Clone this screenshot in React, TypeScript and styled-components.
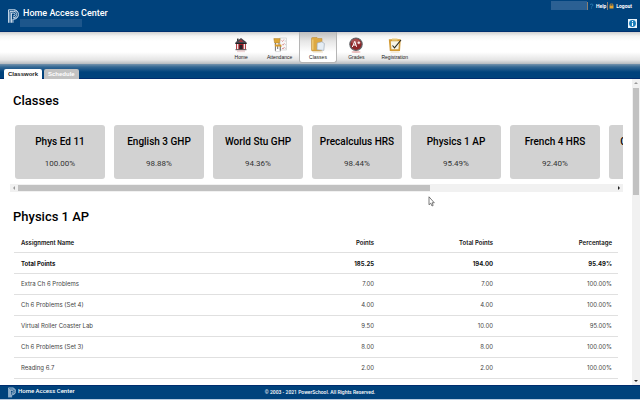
import React from "react";
import styled, { createGlobalStyle } from "styled-components";

const GlobalStyle = createGlobalStyle`
  * { box-sizing: border-box; }
  html, body, #root { height: 100%; }
  body { margin: 0; background: #fff; color: #000; font-family: Roboto, "Liberation Sans", sans-serif; }
  a { color: inherit; text-decoration: none; }
  button { font: inherit; color: inherit; border: 0; padding: 0; margin: 0; background: none; }
`;

const Page = styled.div`
  position: relative;
  display: flex;
  flex-direction: column;
  height: 100vh;
  overflow: hidden;
`;

const Header = styled.header`
  display: flex;
  justify-content: space-between;
  flex: none;
  height: 32px;
  padding: 0 3px 0 8px;
  background: #00427c;
  border-bottom: 1px solid #003070;
  color: #fff;
`;

const Brand = styled.div`
  display: flex;
  gap: 4px;
  padding-top: 8px;
`;

const BrandText = styled.div`
  display: flex;
  flex-direction: column;
`;

const BrandTitle = styled.span`
  font-size: 9px;
  line-height: 11px;
  font-weight: 500;
  white-space: nowrap;
`;

const StudentBox = styled.span`
  width: 62px;
  height: 8px;
  margin-left: -3px;
  background: #1d568b;
`;

const Account = styled.div`
  display: flex;
  flex-direction: column;
  align-items: flex-end;
  justify-content: space-between;
  padding: 1px 0 3px;
`;

const AccountLinks = styled.nav`
  display: flex;
  align-items: center;
  height: 9px;
  padding-right: 4px;
  font-size: 5px;
  line-height: 8px;
  font-weight: 700;
`;

const UserName = styled.span`
  width: 36px;
  height: 9px;
  background: #2b6093;
`;

const AccountLink = styled.a`
  display: flex;
  align-items: center;
  gap: 2px;
  height: 8px;
  padding: 0 1px;
  border-left: 1px solid #8a7f72;
`;

const InfoButton = styled.button`
  display: flex;
  align-items: center;
  justify-content: center;
  width: 9px;
  height: 9px;
  background: #e9f3fb;
`;

const MainNav = styled.nav`
  display: flex;
  justify-content: center;
  flex: none;
  height: 32px;
  padding-right: 4px;
  background: linear-gradient(#cfcfcf, #f4f4f4 4px, #fff 9px, #fff 20px, #e4e4e4 28px, #b4b9be 32px);
`;

const NavGrid = styled.div`
  display: grid;
  grid-template-columns: repeat(5, 1fr);
  width: 192px;
`;

const NavItem = styled.a<{ $active?: boolean }>`
  display: flex;
  flex-direction: column;
  align-items: center;
  height: 31px;
  padding-top: 5px;
  border: 1px solid ${(p) => (p.$active ? "#b5b5b5" : "transparent")};
  border-top: 0;
  border-radius: 0 0 3px 3px;
  background: ${(p) => (p.$active ? "linear-gradient(#bdbdbd, #e6e6e6 9px, #fff 20px)" : "none")};
  font: 5px/6px "Liberation Sans", Arial, sans-serif;
  color: #222;
  svg { display: block; margin-bottom: 1px; }
`;

const TabBar = styled.div`
  display: flex;
  align-items: flex-end;
  gap: 2px;
  flex: none;
  height: 15px;
  padding-left: 4px;
  background: linear-gradient(#7593ac, #346894 3px, #00427c 8px);
  border-bottom: 1px solid #002d6e;
`;

const Tab = styled.button<{ $active?: boolean }>`
  height: 10px;
  margin-bottom: -1px;
  padding: 0 4px;
  border-radius: 2px 2px 0 0;
  background: ${(p) => (p.$active ? "#fff" : "#c2c2c2")};
  color: ${(p) => (p.$active ? "#222" : "#fff")};
  font: bold 6px/10px "Liberation Sans", Arial, sans-serif;
`;

const Body = styled.div`
  display: flex;
  flex: 1;
  min-height: 0;
`;

const Content = styled.main`
  flex: 1;
  min-width: 0;
  overflow: hidden;
  padding: 13px 9px 0 10px;
`;

const Heading = styled.h1`
  margin: 0 0 0 3px;
  font-size: 13px;
  line-height: 18px;
  font-weight: 500;
`;

const CardRail = styled.div`
  display: flex;
  gap: 9px;
  margin-top: 15px;
  padding-left: 5px;
  overflow: hidden;
`;

const Card = styled.article`
  flex: none;
  width: 90px;
  height: 54px;
  padding-top: 10px;
  border-radius: 3px;
  background: #d2d2d2;
  text-align: center;
`;

const CardTitle = styled.h2`
  margin: 0;
  font-size: 10px;
  line-height: 14px;
  font-weight: 500;
  white-space: nowrap;
`;

const CardGrade = styled.p`
  margin: 9px 0 0;
  font-size: 8px;
  line-height: 12px;
  color: #333;
`;

const ScrollTrack = styled.div<{ $vertical?: boolean }>`
  display: flex;
  flex: none;
  flex-direction: ${(p) => (p.$vertical ? "column" : "row")};
  ${(p) => (p.$vertical ? "width: 8px;" : "height: 8px; margin: 5px 0 16px;")}
  background: #f1f1f1;
`;

const ScrollArrow = styled.button`
  display: flex;
  align-items: center;
  justify-content: center;
  flex: none;
  width: 8px;
  height: 8px;
`;

const ScrollRange = styled.div<{ $vertical?: boolean }>`
  display: flex;
  flex: 1;
  flex-direction: ${(p) => (p.$vertical ? "column" : "row")};
  padding: ${(p) => (p.$vertical ? "1px 1px 0" : "1px 0")};
`;

const ScrollThumb = styled.div<{ $length: number }>`
  flex: 0 0 ${(p) => p.$length}%;
  background: #c1c1c1;
`;

const GradeTable = styled.table`
  width: calc(100% - 9px);
  margin: 6px 0 0 4px;
  border-collapse: separate;
  border-spacing: 0;
  table-layout: fixed;
  font-family: Inter, Roboto, sans-serif;
  font-size: 6px;
  line-height: 10px;
  color: #444;
  tr { height: 21px; }
`;

const Cell = styled.td<{ $strong?: boolean }>`
  padding: ${(p) => (p.$strong ? "2px" : "0")} 6px 0 7px;
  border-bottom: 1px solid #e0e0e0;
  text-align: right;
  font-weight: ${(p) => (p.$strong ? 700 : 400)};
  color: ${(p) => (p.$strong ? "#111" : "inherit")};
  &:first-child { text-align: left; }
`;

const HeadCell = styled.th`
  width: 119px;
  padding: 2px 6px 0 7px;
  border-bottom: 1px solid #e0e0e0;
  text-align: right;
  font-weight: 600;
  color: #111;
  &:first-child { width: auto; text-align: left; }
`;

const Footer = styled.footer`
  display: grid;
  grid-template-columns: 1fr auto 1fr;
  flex: none;
  height: 15px;
  padding: 0 8px;
  background: #00427c;
  border-top: 1px solid #002d6e;
  border-bottom: 1px solid #b9cbe0;
  color: #fff;
`;

const FooterBrand = styled.div`
  display: flex;
  gap: 2px;
  padding-top: 1px;
  font-size: 6px;
  line-height: 8px;
  font-weight: 500;
`;

const Copyright = styled.p`
  margin: 0;
  font-size: 5px;
  line-height: 13px;
  font-weight: 500;
`;

const Pointer = styled.svg`
  position: absolute;
  left: 428px;
  top: 196px;
`;

function Logo({ width, height }: { width: number; height: number }) {
  return (
    <svg width={width} height={height} viewBox="0 0 12 16" fill="none" stroke="#dce8f4" strokeWidth="1" aria-hidden="true">
      <path d="M.6 1.2H6.5C13 1.2 13 11.4 6.5 11.4H5.4V15.4" />
      <path d="M.6 1.2V15.4M2.2 3V15.4M3.8 4.5V15.4" />
      <path d="M2.2 3H6.3C10.6 3 10.6 9.7 6.3 9.7H5.4M3.8 4.8H6.3C8.3 4.8 8.3 7.9 6.3 7.9H5.4" />
      <path d="M6.5 1.2L10.8 4M6.5 11.4L10.8 8.6" strokeWidth=".6" />
    </svg>
  );
}

const HomeIcon = () => (
  <svg width="14" height="16" viewBox="0 0 14 16">
    <rect x="3" y="1.6" width="1.6" height="3" fill="#333" />
    <path d="M7 1L12.5 5.2V7H1.5V5.2Z" fill="#45454d" />
    <path d="M7 2.2L9.5 5H4.5Z" fill="#a4343a" />
    <rect x="2" y="6.5" width="10" height="6" fill="#a91f29" />
    <path d="M1.5 6.5H12.5" stroke="#222" />
    <path d="M3.6 7V12M10.4 7V12" stroke="#f0eaea" strokeWidth="1.5" />
    <rect x="5.5" y="8" width="3" height="4.5" fill="#262329" />
    <path d="M1.5 12.7H12.5" stroke="#555" />
    <rect x="3" y="13.2" width="8" height="2" fill="#d69a9e" opacity=".4" />
  </svg>
);

const AttendanceIcon = () => (
  <svg width="14" height="16" viewBox="0 0 14 16" fill="none">
    <rect x="7" y="1" width="6.5" height="12" fill="#f8f8f8" stroke="#c5c5c5" strokeWidth=".6" />
    <path d="M8.5 3.5l1 1 1.5-2M9 7.2l1 1 1.5-2M9 11l1 1 1.5-2" stroke="#d27373" strokeWidth=".7" />
    <path d="M11.7 4h1.2M11.9 7.6h1M11.9 11.3h1" stroke="#aaa" strokeWidth=".6" />
    <path d="M.8 1.6H7.2L6.4 6H1.6Z" fill="#dda634" stroke="#ad7820" strokeWidth=".5" />
    <path d="M2.4 6V8M6 6V8M2.4 9V13.8M7.3 9V13.8M4.7 9V12" stroke="#62605c" strokeWidth=".9" />
    <path d="M1.5 7.4H7.8L9 9.4H2Z" fill="#d89a28" />
    <path d="M2 14.6H8" stroke="#ddd" />
  </svg>
);

const ClassesIcon = () => (
  <svg width="14" height="16" viewBox="0 0 14 16">
    <path d="M.5 1.5Q.5 .5 1.5 .5H6L7 1.5H11V13Q11 14 10 14H1.5Q.5 14 .5 13Z" fill="#dda943" stroke="#b98733" strokeWidth=".5" />
    <path d="M1.8 2.5V12.8" stroke="#f2cf7d" strokeWidth="1.2" />
    <path d="M6.2 6L10.8 4.8L13.4 6.5L12.8 13.4L6 12.7Z" fill="#e5edf4" stroke="#97a4b4" strokeWidth=".6" />
    <path d="M2 15H12" stroke="#e9d5af" strokeWidth=".8" />
  </svg>
);

const GradesIcon = () => (
  <svg width="14" height="16" viewBox="0 0 14 16" fill="none">
    <circle cx="7" cy="7.2" r="6.2" fill="#8d2527" stroke="#60686c" strokeWidth="1.1" />
    <ellipse cx="6.5" cy="4.6" rx="4.3" ry="2.5" fill="#bd7070" opacity=".55" />
    <path d="M3.3 10L5.8 4.3L7.6 9.8M4.2 8H7M8.5 5.8H11.3M9.9 4.4V7.2" stroke="#fff" strokeWidth="1" />
    <ellipse cx="7" cy="15" rx="4.5" ry=".9" fill="#e8b9b9" />
  </svg>
);

const RegistrationIcon = () => (
  <svg width="14" height="16" viewBox="0 0 14 16" fill="none">
    <path d="M.8 2.2H12.7L12 14H1.8Z" fill="#d39b35" />
    <path d="M2.8 4.2H11L10.5 12.2H3.4Z" fill="#f7f4e6" />
    <path d="M4 1.5H9.5V3.7H4Z" fill="#e6c778" />
    <path d="M4.5 8.5L6.5 10.8L13 3" stroke="#29291f" strokeWidth="1.1" />
    <path d="M2.5 15H11.5" stroke="#e7d2a6" strokeWidth=".8" />
  </svg>
);

type Direction = "left" | "right" | "up" | "down";

const arrowPaths: Record<Direction, string> = {
  left: "M3 0V4L1 2Z",
  right: "M1 0V4L3 2Z",
  up: "M0 3H4L2 1Z",
  down: "M0 1H4L2 3Z",
};

function Arrow({ direction, muted }: { direction: Direction; muted?: boolean }) {
  return (
    <ScrollArrow aria-label={`Scroll ${direction}`}>
      <svg width="4" height="4" viewBox="0 0 4 4">
        <path d={arrowPaths[direction]} fill={muted ? "#999" : "#222"} />
      </svg>
    </ScrollArrow>
  );
}

const navItems = [
  { label: "Home", Icon: HomeIcon },
  { label: "Attendance", Icon: AttendanceIcon },
  { label: "Classes", Icon: ClassesIcon, active: true },
  { label: "Grades", Icon: GradesIcon },
  { label: "Registration", Icon: RegistrationIcon },
];

const classes = [
  ["Phys Ed 11", "100.00%"],
  ["English 3 GHP", "98.88%"],
  ["World Stu GHP", "94.36%"],
  ["Precalculus HRS", "98.44%"],
  ["Physics 1 AP", "95.49%"],
  ["French 4 HRS", "92.40%"],
  ["Chemistry HRS", ""],
];

const columns = ["Assignment Name", "Points", "Total Points", "Percentage"];

const rows = [
  ["Total Points", "185.25", "194.00", "95.49%"],
  ["Extra Ch 6 Problems", "7.00", "7.00", "100.00%"],
  ["Ch 6 Problems (Set 4)", "4.00", "4.00", "100.00%"],
  ["Virtual Roller Coaster Lab", "9.50", "10.00", "95.00%"],
  ["Ch 6 Problems (Set 3)", "8.00", "8.00", "100.00%"],
  ["Reading 6.7", "2.00", "2.00", "100.00%"],
];

export default function App() {
  return (
    <Page>
      <GlobalStyle />
      <Header>
        <Brand>
          <Logo width={11} height={16} />
          <BrandText>
            <BrandTitle>Home Access Center</BrandTitle>
            <StudentBox />
          </BrandText>
        </Brand>
        <Account>
          <AccountLinks>
            <UserName />
            <AccountLink href="#help">
              <svg width="5" height="6" viewBox="0 0 5 6" fill="none" stroke="#2474ad">
                <path d="M1 1.5Q4 0 4 2Q4 3 2.5 3.5M2.5 4.5V5.5" />
              </svg>
              Help
            </AccountLink>
            <AccountLink href="#logout">
              <svg width="5" height="6" viewBox="0 0 5 6">
                <path d="M.5 2.5H4.5V5.5H.5Z" fill="#e5a52f" />
                <path d="M1.2 3V1H3.8V3" fill="none" stroke="#c98e2e" strokeWidth=".8" />
              </svg>
              Logout
            </AccountLink>
          </AccountLinks>
          <InfoButton aria-label="Information">
            <svg width="7" height="7" viewBox="0 0 7 7">
              <circle cx="3.5" cy="3.5" r="3.4" fill="#167bb9" />
              <path d="M3.5 1V2M3.5 2.8V6" stroke="#fff" strokeWidth="1.1" />
            </svg>
          </InfoButton>
        </Account>
      </Header>

      <MainNav aria-label="Main">
        <NavGrid>
          {navItems.map(({ label, Icon, active }) => (
            <NavItem key={label} href={`#${label.toLowerCase()}`} $active={active}>
              <Icon />
              {label}
            </NavItem>
          ))}
        </NavGrid>
      </MainNav>

      <TabBar role="tablist">
        <Tab role="tab" aria-selected="true" $active>Classwork</Tab>
        <Tab role="tab" aria-selected="false">Schedule</Tab>
      </TabBar>

      <Body>
        <Content>
          <Heading>Classes</Heading>
          <CardRail>
            {classes.map(([name, grade]) => (
              <Card key={name}>
                <CardTitle>{name}</CardTitle>
                <CardGrade>{grade}</CardGrade>
              </Card>
            ))}
          </CardRail>
          <ScrollTrack>
            <Arrow direction="left" muted />
            <ScrollRange><ScrollThumb $length={69} /></ScrollRange>
            <Arrow direction="right" />
          </ScrollTrack>

          <Heading as="h2">Physics 1 AP</Heading>
          <GradeTable>
            <thead>
              <tr>{columns.map((name) => <HeadCell key={name} scope="col">{name}</HeadCell>)}</tr>
            </thead>
            <tbody>
              {rows.map((row, index) => (
                <tr key={row[0]}>
                  {row.map((value, column) => <Cell key={column} $strong={index === 0}>{value}</Cell>)}
                </tr>
              ))}
            </tbody>
          </GradeTable>
        </Content>
        <ScrollTrack $vertical>
          <Arrow direction="up" muted />
          <ScrollRange $vertical><ScrollThumb $length={37} /></ScrollRange>
          <Arrow direction="down" />
        </ScrollTrack>
      </Body>

      <Footer>
        <FooterBrand>
          <Logo width={8} height={11} />
          <span>Home Access Center</span>
        </FooterBrand>
        <Copyright>© 2003 - 2021 PowerSchool. All Rights Reserved.</Copyright>
      </Footer>

      <Pointer width="7" height="11" viewBox="0 0 7 11" aria-hidden="true">
        <path d="M1 .8V8.8L2.7 7.2L4 10L5.2 9.4L4 6.8H6.3Z" fill="#fff" stroke="#444" strokeWidth=".7" />
      </Pointer>
    </Page>
  );
}
